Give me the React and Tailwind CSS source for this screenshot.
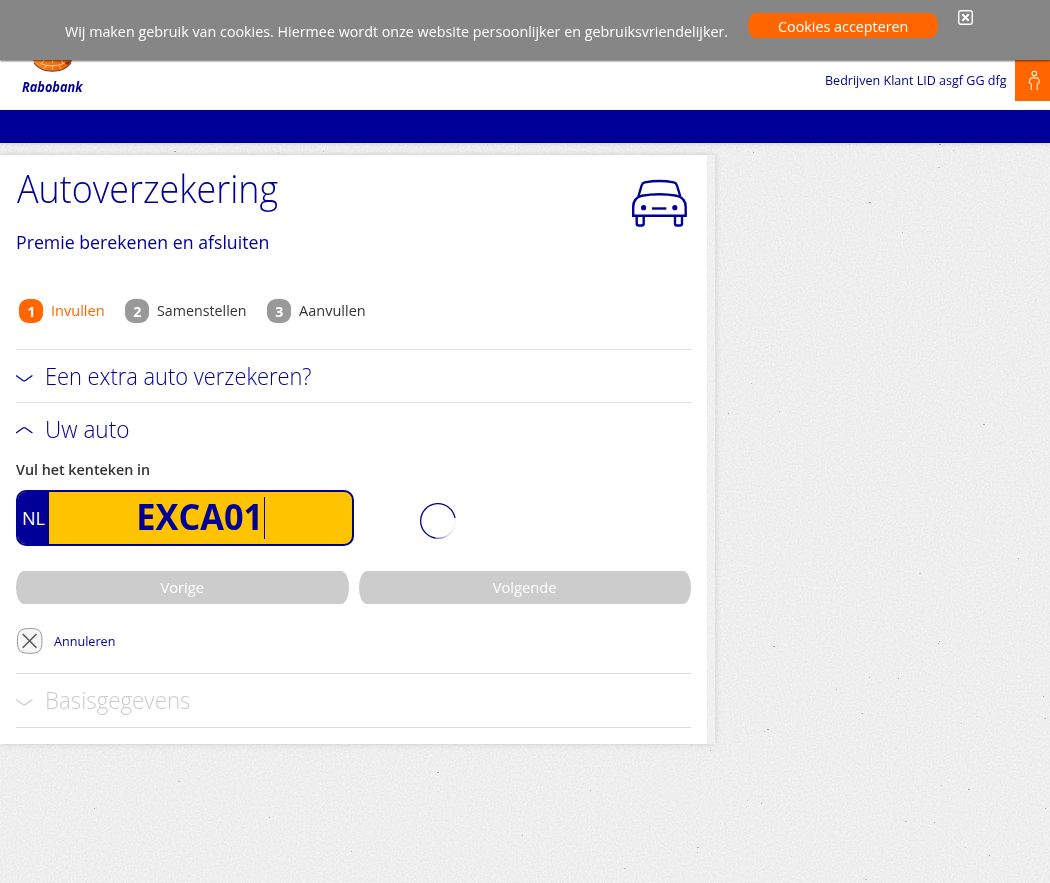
const SPECKS = [
  [773, 646], [869, 677], [898, 678], [861, 713], [938, 643], [764, 731], [767, 729], [961, 723], [1043, 696], [1044, 718],
  [836, 689], [941, 785], [968, 789], [747, 800], [761, 803], [905, 821], [934, 822], [965, 847], [697, 847], [697, 852],
  [1045, 808], [865, 879], [989, 855], [849, 144], [939, 144], [953, 150], [753, 152], [938, 167], [728, 413], [751, 383],
  [869, 202], [902, 232], [1018, 558], [919, 573], [939, 641], [779, 411], [983, 424], [1035, 300], [94, 808], [178, 781],
  [269, 817], [351, 851], [437, 772], [522, 835], [590, 790], [624, 868], [710, 750], [278, 152], [174, 151], [323, 151],
];

function Texture() {
  return (
    <svg className="absolute inset-0 -z-10 h-full w-full" aria-hidden="true">
      <filter id="grain" x="0" y="0" width="100%" height="100%" colorInterpolationFilters="sRGB">
        <feTurbulence type="fractalNoise" baseFrequency="0.55" numOctaves="3" seed="4" />
        <feColorMatrix values="0.09 0 0 0 0.889  0.09 0 0 0 0.889  0.09 0 0 0 0.889  0 0 0 0 1" />
      </filter>
      <rect width="100%" height="100%" filter="url(#grain)" />
      {SPECKS.map(([x, y], i) => (
        <rect key={i} x={x} y={y} width={i % 3 === 0 ? 2 : 1} height="1" fill={i % 2 ? '#c0c0c0' : '#a5a5a5'} />
      ))}
    </svg>
  );
}

function Text({ className = '', children }) {
  return <span className={`inline-block whitespace-nowrap ${className}`}>{children}</span>;
}

function CookieBar() {
  return (
    <div className="absolute inset-x-0 top-0 z-20 flex h-[60px] items-start bg-[#868686] pl-[65px] text-[15px] leading-5 text-white shadow-[0_1px_2px_rgba(0,0,0,0.6)]">
      <div className="w-[683px] pt-[21px]">
        <Text className="origin-left scale-x-[0.954]">
          Wij maken gebruik van cookies. Hiermee wordt onze website persoonlijker en gebruiksvriendelijker.
        </Text>
      </div>
      <button className="mt-[13px] flex h-[25px] w-[190px] items-center justify-center rounded-[8px/12px] bg-[#ff6600] pt-px">
        <Text className="scale-x-[0.955]">Cookies accepteren</Text>
      </button>
      <svg className="mt-[10px] ml-5 h-[15px] w-[15px]" viewBox="0 0 15 15" fill="none" stroke="white">
        <rect x="0.75" y="0.75" width="13.5" height="13.5" rx="2" strokeWidth="1.4" />
        <path d="M4.300 4.300l6.400 6.400M10.700 4.300l-6.400 6.400" strokeWidth="2" />
      </svg>
    </div>
  );
}

function Header() {
  return (
    <header>
      <div className="flex h-[110px] justify-between bg-white">
        <div className="w-[90px] pt-[36px] pl-[22px]">
          <svg className="ml-[10px] h-[36px] w-[41px]" viewBox="0 0 41 36">
            <defs>
              <linearGradient id="globe" x1="0" y1="0" x2="1" y2="0.3">
                <stop offset="0" stopColor="#f7b04e" />
                <stop offset="0.45" stopColor="#ff7a14" />
                <stop offset="1" stopColor="#f26000" />
              </linearGradient>
            </defs>
            <ellipse cx="20.5" cy="21" rx="20" ry="14.2" fill="url(#globe)" />
            <path d="M2 27c4 5.600 11 8.200 18.500 8.200S35 32.500 39 27" fill="none" stroke="#723b36" strokeWidth="1.100" />
            <path d="M32 27l7-2-3 4z" fill="#69372d" />
            <path d="M8 27.500Q20.500 32.500 33 27M20.500 24v3M20.500 29.500v4M12 24l-2 3M29 24l2 3M14 30l-2 2.500M27 30l2 2.500" fill="none" stroke="#ffd9b0" strokeWidth="0.900" />
          </svg>
          <div className="mt-[6px] text-sm leading-[17px] font-bold text-[#000099] italic">
            <Text className="origin-left scale-x-[0.91]">Rabobank</Text>
          </div>
        </div>
        <div className="flex pt-[60px]">
          <div className="w-[190px] pt-[10px] text-[13px] leading-5 text-[#000099]">
            <Text className="origin-left scale-x-[0.964]">Bedrijven Klant LID asgf GG dfg</Text>
          </div>
          <div className="h-[41px] w-[35px] bg-[#ff6600] pt-[10px] pl-[13px]">
            <svg className="h-[21px] w-[13px]" viewBox="0 0 13 21" fill="none" stroke="#fff0e5" strokeWidth="1.1">
              <circle cx="6.300" cy="3.600" r="2.300" />
              <path d="M3.300 20v-6L1.200 12.500c.3-2 .8-3.700 1.900-4.600h6.400c1.100.9 1.600 2.600 1.900 4.600L9.300 14v6" />
            </svg>
          </div>
        </div>
      </div>
      <nav className="h-[33px] bg-[#000099] shadow-[0_1px_4px_rgba(0,0,0,0.12)]" />
    </header>
  );
}

function CarIcon() {
  return (
    <svg className="h-[50px] w-[58px]" viewBox="0 0 58 50" fill="none" stroke="#000099" strokeWidth="2.400">
      <path d="M8.400 17.500L11.600 6.500Q12.300 4 14.800 3.400Q29.300 .6 43.800 3.400Q46.300 4 47 6.500L50.300 17.500" />
      <path d="M3.200 36.800V28C3.200 20.500 6.700 18 11.700 16.800Q29.300 13.800 46.900 16.800C51.900 18 55.700 20.500 55.700 28V36.800Z" />
      <path d="M6.700 37V44.500Q6.700 46.500 8.700 46.500H11.700Q13.700 46.500 13.700 44.500V37M45 37V44.500Q45 46.500 47 46.500H50Q52 46.500 52 44.500V37" />
      <path d="M22 29.500H36.300" />
      <g fill="#000099" stroke="none">
        <circle cx="13.600" cy="28.700" r="2.600" />
        <circle cx="44.800" cy="28.700" r="2.600" />
      </g>
    </svg>
  );
}

function Step({ number, label, active, className, textClass }) {
  return (
    <li className={`flex items-center gap-2 ${className}`}>
      <span
        className={`flex h-6 w-6 items-center justify-center rounded-[9px] pb-px text-[15px] leading-6 font-bold text-white ${active ? 'bg-[#ff6600]' : 'bg-[#999999]'}`}
      >
        <Text className="scale-x-[0.95]">{number}</Text>
      </span>
      <Text className={`origin-left pb-0.5 ${textClass}`}>{label}</Text>
    </li>
  );
}

function Chevron({ up }) {
  return (
    <svg className="mt-px h-2.5 w-[17px] shrink-0" viewBox="0 0 17 10" fill="none" stroke="currentColor" strokeWidth="1.3">
      <path d={up ? 'M0 7L7 2Q8.200 1.200 9.400 2L16.400 7' : 'M0 2.500L7 7.500Q8.200 8.300 9.400 7.500L16.400 2.500'} />
    </svg>
  );
}

function SectionTitle({ up, className, textClass, children }) {
  return (
    <h3 className={`flex items-center gap-3 text-2xl leading-8 font-light ${className}`}>
      <Chevron up={up} />
      <Text className={`origin-left pb-0.5 ${textClass}`}>{children}</Text>
    </h3>
  );
}

function Spinner() {
  return (
    <svg className="h-9 w-9" viewBox="0 0 36 36" fill="none" strokeWidth="1.300">
      <defs>
        <linearGradient id="fade" gradientUnits="userSpaceOnUse" x1="15" y1="35" x2="34" y2="22">
          <stop offset="0" stopColor="#000099" stopOpacity="0.6" />
          <stop offset="0.5" stopColor="#000099" stopOpacity="0.18" />
          <stop offset="1" stopColor="#000099" stopOpacity="0.04" />
        </linearGradient>
      </defs>
      <path d="M15 35A17.300 17.300 0 1 1 35 15" stroke="#000099" />
      <path d="M15 35A17.300 17.300 0 0 0 35 15" stroke="url(#fade)" />
    </svg>
  );
}

function NavButton({ className, children }) {
  return (
    <button className={`h-[33px] rounded-[8px/16px] bg-[#cccccc] pb-px text-[15px] text-white ${className}`}>
      <Text className="scale-x-[0.98]">{children}</Text>
    </button>
  );
}

export default function App() {
  return (
    <div className="relative isolate h-[883px] w-full overflow-hidden bg-[#eeeeee] font-['Open_Sans',sans-serif] text-[#333333]">
      <Texture />
      <CookieBar />
      <Header />
      <div className="mt-3 w-[715px] bg-white/10 pr-2 shadow-[0_0_6px_rgba(0,0,0,0.13)]">
        <main className="h-[589px] bg-white px-4 shadow-[0_0_1px_rgba(0,0,0,0.08)]">
          <div className="flex h-[144px] justify-between text-[#000099]">
            <div className="pt-[8px]">
              <h1 className="pl-px text-[38px] leading-[50px] font-light">
                <Text className="origin-left scale-x-[0.944]">Autoverzekering</Text>
              </h1>
              <h2 className="mt-[15px] text-lg leading-7">
                <Text className="origin-left scale-x-[0.984]">Premie berekenen en afsluiten</Text>
              </h2>
            </div>
            <div className="pt-[24px] pr-[3px]">
              <CarIcon />
            </div>
          </div>
          <ol className="flex h-[50px] pl-[3px] text-[15px] leading-6">
            <Step number={1} label="Invullen" active className="h-6 w-[106px] text-[#ff6600]" textClass="scale-x-[0.97]" />
            <Step number={2} label="Samenstellen" className="h-6 w-[142px]" textClass="scale-x-[0.95]" />
            <Step number={3} label="Aanvullen" className="h-6" textClass="scale-x-[0.968]" />
          </ol>
          <section className="h-[53px] border-t border-[#dddddd]">
            <SectionTitle className="h-[53px] pt-px text-[#000099]" textClass="scale-x-[0.91]">
              Een extra auto verzekeren?
            </SectionTitle>
          </section>
          <section className="h-[271px] border-t border-[#dddddd]">
            <SectionTitle up className="h-[54px] text-[#000099]" textClass="scale-x-[0.94]">
              Uw auto
            </SectionTitle>
            <label className="block h-[33px] text-[15px] leading-6 font-semibold">
              <Text className="origin-left scale-x-[0.953]">Vul het kenteken in</Text>
            </label>
            <div className="flex items-center">
              <div className="flex h-14 w-[338px] overflow-hidden rounded-[10px] border-2 border-[#000099] bg-[#ffc300]">
                <span className="flex w-[31px] items-center justify-center bg-[#000099] text-lg text-white">
                  <Text>NL</Text>
                </span>
                <span className="flex flex-1 items-center justify-center pr-px text-[35px] leading-none font-bold text-[#000099]">
                  <Text className="pb-[3px] scale-x-[0.98]">EXCA01</Text>
                  <span className="h-[42px] w-px bg-[#000099]" />
                </span>
              </div>
              <div className="mt-[6px] ml-[66px]">
                <Spinner />
              </div>
            </div>
            <div className="mt-[25px] flex gap-2.5">
              <NavButton className="w-[333px]">Vorige</NavButton>
              <NavButton className="w-[332px]">Volgende</NavButton>
            </div>
            <div className="mt-[23px] flex items-center gap-[10px] text-[13px] text-[#000099]">
              <svg className="h-7 w-7" viewBox="0 0 28 28" fill="none">
                <path
                  d="M13.700 1.500C22.500 1.500 26 3 26 13.900S22.500 26.300 13.700 26.300 1.400 24.500 1.400 13.900 5 1.500 13.700 1.500Z"
                  fill="#f6f6f6"
                  stroke="#999999"
                />
                <path d="M6.700 7L20.500 20.800M20.500 7L6.700 20.800" stroke="#555555" strokeWidth="1.500" />
              </svg>
              <Text className="origin-left pt-px scale-x-[0.97]">Annuleren</Text>
            </div>
          </section>
          <section className="h-[55px] border-y border-[#dddddd]">
            <SectionTitle className="h-[53px] pt-px text-[#cccccc]" textClass="scale-x-[0.93]">
              Basisgegevens
            </SectionTitle>
          </section>
        </main>
      </div>
    </div>
  );
}
